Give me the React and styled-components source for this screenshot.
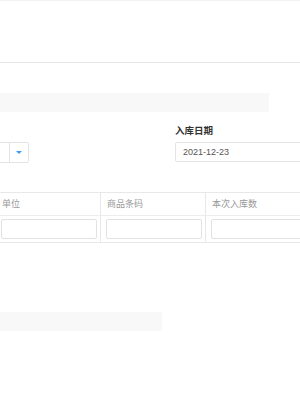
import React from "react";
import styled, { createGlobalStyle } from "styled-components";

const GlobalStyle = createGlobalStyle`
  html, body {
    margin: 0;
    padding: 0;
    background: #fff;
    overflow: hidden;
  }
  body {
    font-family: "Liberation Sans", "Noto Sans CJK SC", sans-serif;
  }
`;

// the page is scrolled sideways: the first and last columns lie outside the frame
const columns = [
  { key: "name", title: "", width: 116 },
  { key: "unit", title: "单位", width: 105 },
  { key: "code", title: "商品条码", width: 105 },
  { key: "qty", title: "本次入库数", width: 105 },
  { key: "note", title: "", width: 105 },
];

const App = () => {
  return (
    <>
      <GlobalStyle />
      <TopBar />
      <Page>
        <SectionBar />
        <FormRow>
          <Field $width={149}>
            <Label />
            <Select>
              <SelectValue />
              <SelectArrow>
                <Caret />
              </SelectArrow>
            </Select>
          </Field>
          <Field $width={240}>
            <Label>入库日期</Label>
            <Input>2021-12-23</Input>
          </Field>
        </FormRow>
        <Table>
          <HeadRow>
            {columns.map((col) => (
              <HeadCell key={col.key} $width={col.width}>
                {col.title}
              </HeadCell>
            ))}
          </HeadRow>
          <BodyRow>
            {columns.map((col) => (
              <BodyCell key={col.key} $width={col.width}>
                <CellInput />
              </BodyCell>
            ))}
          </BodyRow>
        </Table>
        <SectionBar $width={282} $top={69} />
      </Page>
    </>
  );
};
export default App;

const TopBar = styled.header`
  height: 61px;
  border-top: 1px solid #f2f2f2;
  border-bottom: 1px solid #e6e6e6;
`;

const Page = styled.main`
  width: 640px;
  margin-left: -120px;
`;

const SectionBar = styled.div`
  width: ${(p) => p.$width || 389}px;
  height: 19px;
  margin-top: ${(p) => p.$top || 30}px;
  background: #f8f8f8;
`;

const FormRow = styled.div`
  display: flex;
  gap: 146px;
  margin-top: 12px;
`;

const Field = styled.div`
  display: flex;
  flex-direction: column;
  gap: 4px;
  width: ${(p) => p.$width}px;
`;

const Label = styled.label`
  height: 14px;
  line-height: 14px;
  font-size: 9.5px;
  font-weight: bold;
  color: #333;
`;

const Select = styled.div`
  display: flex;
  height: 19px;
  border: 1px solid #e4e4e4;
  border-radius: 2px;
`;

const SelectValue = styled.div`
  flex: 1;
`;

const SelectArrow = styled.div`
  width: 18px;
  display: flex;
  align-items: center;
  justify-content: center;
  border-left: 1px solid #e4e4e4;
`;

const Caret = styled.span`
  width: 0;
  height: 0;
  border-left: 3px solid transparent;
  border-right: 3px solid transparent;
  border-top: 3px solid #3d9cf2;
`;

const Input = styled.div`
  height: 20px;
  box-sizing: border-box;
  border: 1px solid #e4e4e4;
  border-radius: 2px;
  padding-left: 7px;
  line-height: 18px;
  font-size: 9px;
  color: #555;
`;

const Table = styled.div`
  margin-top: 29px;
  border-top: 1px solid #e8e8e8;
  border-bottom: 1px solid #e8e8e8;
`;

const HeadRow = styled.div`
  display: flex;
  height: 22px;
  border-bottom: 1px solid #ededed;
`;

const BodyRow = styled.div`
  display: flex;
  height: 26px;
`;

const HeadCell = styled.div`
  box-sizing: border-box;
  width: ${(p) => p.$width}px;
  padding-left: 6px;
  border-right: 1px solid #e8e8e8;
  line-height: 22px;
  font-size: 9px;
  color: #999;
`;

const BodyCell = styled.div`
  box-sizing: border-box;
  width: ${(p) => p.$width}px;
  padding: 3px 3px 3px 5px;
  border-right: 1px solid #e8e8e8;
`;

const CellInput = styled.div`
  height: 20px;
  box-sizing: border-box;
  border: 1px solid #e2e2e2;
  border-radius: 2px;
`;
